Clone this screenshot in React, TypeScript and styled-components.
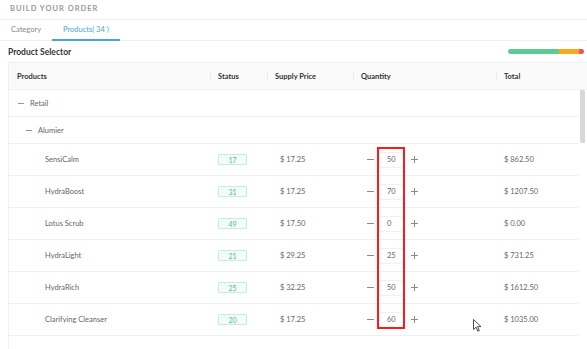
import React from 'react';
import styled, { createGlobalStyle } from 'styled-components';

const GlobalStyle = createGlobalStyle`
  html, body {
    margin: 0;
    padding: 0;
    background: #ffffff;
  }
  body {
    font-family: Lato, "Liberation Sans", sans-serif;
    color: #555;
    -webkit-font-smoothing: antialiased;
  }
  * { box-sizing: border-box; }
`;

const Page = styled.div`
  position: relative;
  width: 587px;
  height: 349px;
  overflow: hidden;
  background: #fff;
`;

const PageTitle = styled.div`
  height: 20px;
  display: flex;
  align-items: center;
  padding: 0 0 2px 10px;
  font-size: 7.5px;
  font-weight: 700;
  letter-spacing: 1px;
  text-transform: uppercase;
  color: #9a9a9a;
  border-bottom: 1px solid #f0f0f0;
`;

const TabBar = styled.div`
  height: 21px;
  display: flex;
  border-bottom: 1px solid #f0f0f0;
`;

const Tab = styled.div<{ $active?: boolean }>`
  display: flex;
  align-items: center;
  padding: 0 11px;
  font-size: 7.5px;
  color: ${p => (p.$active ? '#4aa3d8' : '#888')};
  border-bottom: 2px solid ${p => (p.$active ? '#4aa3d8' : 'transparent')};
  margin-bottom: -1px;
`;

const SelectorHeader = styled.div`
  height: 21px;
  display: flex;
  align-items: center;
  justify-content: space-between;
  padding: 0 3px 0 8px;
`;

const SelectorTitle = styled.div`
  font-size: 8.5px;
  font-weight: 700;
  color: #333;
`;

const Progress = styled.div`
  display: flex;
  width: 76px;
  height: 5px;
  border-radius: 3px;
  overflow: hidden;
`;

const Segment = styled.div<{ $color: string; $grow: number }>`
  flex: ${p => p.$grow};
  background: ${p => p.$color};
`;

const Table = styled.div`
  margin-left: 8px;
  border-left: 1px solid #f0f0f0;
  border-top: 1px solid #f0f0f0;
`;

const columns = '201px 57px 86px 143px 1fr';

const HeadRow = styled.div`
  display: grid;
  grid-template-columns: ${columns};
  height: 27px;
  background: #fafafa;
  border-bottom: 1px solid #f0f0f0;
`;

const HeadCell = styled.div<{ $sep?: boolean }>`
  position: relative;
  display: flex;
  align-items: center;
  padding-left: 8px;
  font-size: 7.5px;
  font-weight: 700;
  color: #333;
  &::before {
    content: '';
    display: ${p => (p.$sep ? 'block' : 'none')};
    position: absolute;
    left: 0;
    top: 8px;
    bottom: 8px;
    width: 1px;
    background: #ececec;
  }
`;

const BodyWrap = styled.div`
  display: flex;
`;

const Rows = styled.div`
  flex: 1;
`;

const ScrollTrack = styled.div`
  width: 8px;
  padding: 0 2px 0 1px;
`;

const ScrollThumb = styled.div`
  height: 53px;
  background: #d8d8d8;
  border-radius: 1px;
`;

const GroupRow = styled.div<{ $indent: number }>`
  height: 27px;
  display: flex;
  align-items: center;
  gap: 6px;
  padding-left: ${p => p.$indent}px;
  font-size: 7.5px;
  color: #666;
  border-bottom: 1px solid #f0f0f0;
`;

const Collapse = styled.span`
  display: inline-block;
  width: 6px;
  height: 1px;
  background: #999;
`;

const ItemRow = styled.div`
  display: grid;
  grid-template-columns: ${columns};
  height: 32px;
  border-bottom: 1px solid #f0f0f0;
  font-size: 7.5px;
  color: #666;
`;

const Cell = styled.div<{ $pad?: number }>`
  display: flex;
  align-items: center;
  padding-left: ${p => p.$pad ?? 8}px;
`;

const StatusBadge = styled.div`
  width: 29px;
  height: 11px;
  display: flex;
  align-items: center;
  justify-content: center;
  border: 1px solid #c6efd9;
  background: #f3fcf7;
  border-radius: 1px;
  color: #4dc386;
  font-size: 7px;
`;

const Stepper = styled.div`
  display: flex;
  align-items: center;
  padding-left: 14px;
`;

const Minus = styled.span`
  display: inline-block;
  width: 7px;
  height: 1px;
  background: #8a8a8a;
`;

const Plus = styled.span`
  position: relative;
  display: inline-block;
  width: 7px;
  height: 7px;
  &::before, &::after {
    content: '';
    position: absolute;
    background: #8a8a8a;
  }
  &::before { left: 0; right: 0; top: 3px; height: 1px; }
  &::after { top: 0; bottom: 0; left: 3px; width: 1px; }
`;

const QtyInput = styled.div`
  width: 26px;
  height: 16px;
  margin: 0 6px 0 5px;
  display: flex;
  align-items: center;
  padding-left: 7px;
  border: 1px solid #f0f0f0;
  font-size: 7.5px;
  color: #666;
`;

const Highlight = styled.div`
  position: absolute;
  left: 377px;
  top: 147px;
  width: 28px;
  height: 182px;
  border: 2px solid #ff1a1a;
`;

const Cursor = styled.svg`
  position: absolute;
  left: 473px;
  top: 319px;
`;

const products = [
  { name: 'SensiCalm', status: 17, price: '$ 17.25', qty: 50, total: '$ 862.50' },
  { name: 'HydraBoost', status: 31, price: '$ 17.25', qty: 70, total: '$ 1207.50' },
  { name: 'Lotus Scrub', status: 49, price: '$ 17.50', qty: 0, total: '$ 0.00' },
  { name: 'HydraLight', status: 21, price: '$ 29.25', qty: 25, total: '$ 731.25' },
  { name: 'HydraRich', status: 25, price: '$ 32.25', qty: 50, total: '$ 1612.50' },
  { name: 'Clarifying Cleanser', status: 20, price: '$ 17.25', qty: 60, total: '$ 1035.00' },
];

export default function App() {
  return (
    <Page>
      <GlobalStyle />
      <PageTitle>Build your order</PageTitle>
      <TabBar>
        <Tab>Category</Tab>
        <Tab $active>Products( 34 )</Tab>
      </TabBar>
      <SelectorHeader>
        <SelectorTitle>Product Selector</SelectorTitle>
        <Progress>
          <Segment $color="#5ecb92" $grow={51} />
          <Segment $color="#f9a91b" $grow={20} />
          <Segment $color="#f4525a" $grow={5} />
        </Progress>
      </SelectorHeader>
      <Table>
        <HeadRow>
          <HeadCell>Products</HeadCell>
          <HeadCell $sep>Status</HeadCell>
          <HeadCell $sep>Supply Price</HeadCell>
          <HeadCell $sep>Quantity</HeadCell>
          <HeadCell $sep>Total</HeadCell>
        </HeadRow>
        <BodyWrap>
          <Rows>
            <GroupRow $indent={9}>
              <Collapse />
              Retail
            </GroupRow>
            <GroupRow $indent={17}>
              <Collapse />
              Alumier
            </GroupRow>
            {products.map(p => (
              <ItemRow key={p.name}>
                <Cell $pad={36}>{p.name}</Cell>
                <Cell>
                  <StatusBadge>{p.status}</StatusBadge>
                </Cell>
                <Cell $pad={13}>{p.price}</Cell>
                <Stepper>
                  <Minus />
                  <QtyInput>{p.qty}</QtyInput>
                  <Plus />
                </Stepper>
                <Cell>{p.total}</Cell>
              </ItemRow>
            ))}
            <ItemRow />
          </Rows>
          <ScrollTrack>
            <ScrollThumb />
          </ScrollTrack>
        </BodyWrap>
      </Table>
      <Highlight />
      <Cursor width="9" height="13" viewBox="0 0 9 13">
        <path d="M0.5 0.5 L0.5 10.5 L3 8.2 L4.8 12.2 L6.3 11.5 L4.5 7.6 L8 7.6 Z" fill="#fff" stroke="#222" strokeWidth="0.8" strokeLinejoin="round" />
      </Cursor>
    </Page>
  );
}
